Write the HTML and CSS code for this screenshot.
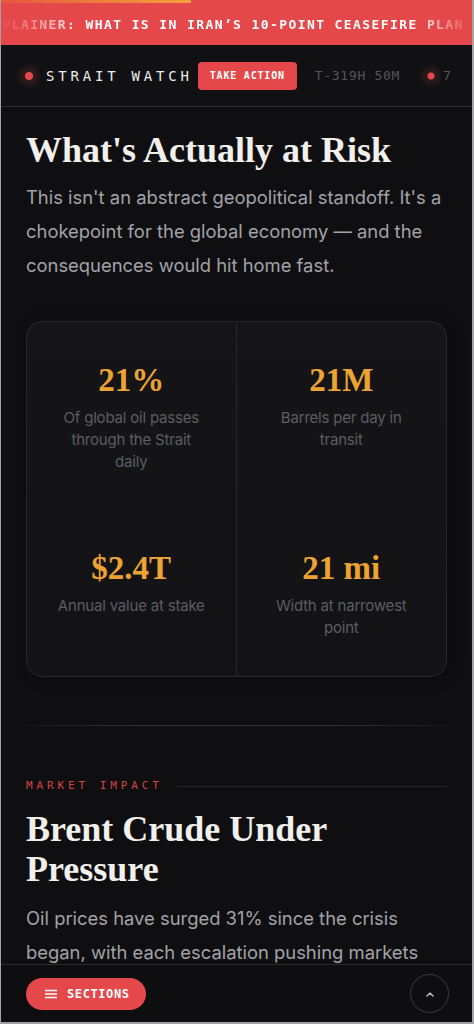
FILE: index.html
```html
<!DOCTYPE html>
<html lang="en">
<head>
    <meta charset="UTF-8">
    <meta name="viewport" content="width=device-width, initial-scale=1.0">
    <title>Strait Watch</title>
    <link rel="stylesheet" href="styles.css">
</head>
<body>
    <div class="app">
        <div class="ticker">
            <div class="progress"></div>
            <div class="ticker-row">
                <span class="ticker-text">EXPLAINER: WHAT IS IN IRAN’S 10-POINT CEASEFIRE PLAN &nbsp;/&nbsp; LIVE UPDATES</span>
            </div>
        </div>

        <header class="topbar">
            <span class="live-dot"></span>
            <span class="brand">STRAIT WATCH</span>
            <a class="action-btn" href="#">TAKE ACTION</a>
            <span class="timer">T-319H 50M</span>
            <span class="live-dot small"></span>
            <span class="count">7</span>
        </header>

        <main class="content">
            <h2 class="title">What's Actually at Risk</h2>
            <p class="lead">This isn't an abstract geopolitical standoff. It's a chokepoint for the global economy — and the consequences would hit home fast.</p>

            <div class="stats">
                <div class="stat">
                    <div class="stat-num">21%</div>
                    <div class="stat-label">Of global oil passes through the Strait daily</div>
                </div>
                <div class="stat">
                    <div class="stat-num">21M</div>
                    <div class="stat-label">Barrels per day in transit</div>
                </div>
                <div class="stat">
                    <div class="stat-num">$2.4T</div>
                    <div class="stat-label">Annual value at stake</div>
                </div>
                <div class="stat">
                    <div class="stat-num">21 mi</div>
                    <div class="stat-label">Width at narrowest point</div>
                </div>
            </div>

            <hr class="divider">

            <div class="eyebrow">
                <span>MARKET IMPACT</span>
                <span class="eyebrow-line"></span>
            </div>
            <h2 class="title">Brent Crude Under Pressure</h2>
            <p class="lead">Oil prices have surged 31% since the crisis began, with each escalation pushing markets</p>
        </main>

        <nav class="bottom-bar">
            <button class="sections-btn">
                <svg width="12" height="10" viewBox="0 0 12 10"><path d="M0 1.5h12M0 5h12M0 8.5h12" stroke="#fff" stroke-width="1.5"/></svg>
                SECTIONS
            </button>
            <button class="top-btn" aria-label="Back to top">
                <svg width="10" height="6" viewBox="0 0 10 6"><path d="M2 5l3-3 3 3" fill="none" stroke="#b5b5ba" stroke-width="1.5" stroke-linecap="round" stroke-linejoin="round"/></svg>
            </button>
        </nav>
    </div>
</body>
</html>
```

FILE: styles.css
```css
body {
    margin: 0;
    background-color: #a3a3a6; /* frame around the page */
    padding: 0 2px 2px 1px;
    font-family: Inter, "Noto Sans", sans-serif;
}

.app {
    height: calc(100vh - 2px);
    display: flex;
    flex-direction: column;
    background-color: #0f0f12;
    overflow: hidden;
}

/* ticker */
.ticker {
    background-color: #e5484a;
    flex-shrink: 0;
}

.progress {
    height: 3px;
    width: 190px;
    background: linear-gradient(90deg, #e8573f, #f2a23a);
}

.ticker-row {
    height: 42px;
    display: flex;
    align-items: center;
    overflow: hidden;
    -webkit-mask-image: linear-gradient(90deg, transparent 0, #000 85px, #000 calc(100% - 60px), transparent 100%);
    mask-image: linear-gradient(90deg, transparent 0, #000 85px, #000 calc(100% - 60px), transparent 100%);
}

.ticker-text {
    font-family: "DejaVu Sans Mono", "Liberation Mono", monospace;
    font-size: 13px;
    font-weight: bold;
    letter-spacing: 1.4px;
    color: #fff;
    white-space: nowrap;
    transform: translateX(-17px); /* marquee position */
}

/* top bar */
.topbar {
    height: 61px;
    flex-shrink: 0;
    display: flex;
    align-items: center;
    padding-left: 16px;
    background-color: #111114;
    border-bottom: 1px solid #2b2b30;
    white-space: nowrap;
    overflow: hidden;
    font-family: "DejaVu Sans Mono", "Liberation Mono", monospace;
}

.topbar > * {
    flex-shrink: 0;
}

.live-dot {
    width: 24px;
    height: 24px;
    border-radius: 50%;
    background: radial-gradient(circle, #e5484a 0 3.5px, rgba(229, 72, 74, 0.16) 4.5px, rgba(229, 72, 74, 0.05) 11px, transparent 12px);
    margin-right: 5px;
}

.live-dot.small {
    width: 22px;
    height: 22px;
    margin-left: 20px;
    margin-right: 1px;
    background: radial-gradient(circle, #e5484a 0 3px, rgba(229, 72, 74, 0.14) 4px, rgba(229, 72, 74, 0.05) 10px, transparent 11px);
}

.brand {
    font-size: 14px;
    letter-spacing: 3.8px;
    color: #ececec;
    margin-right: 5px;
}

.action-btn {
    height: 28px;
    line-height: 28px;
    padding: 0 12px;
    border-radius: 4px;
    background-color: #e5484a;
    color: #fff;
    font-size: 10px;
    font-weight: bold;
    letter-spacing: 0.8px;
    text-decoration: none;
}

.timer {
    margin-left: 18px;
    font-size: 13px;
    letter-spacing: 0.7px;
    color: #55555b;
}

.count {
    font-size: 13px;
    color: #55555b;
}

/* main content */
.content {
    flex: 1;
    overflow: hidden;
    padding: 23px 25px 0 25px;
}

.title {
    font-family: "Liberation Serif", "DejaVu Serif", serif;
    font-weight: bold;
    font-size: 36px;
    line-height: 40px;
    color: #f1f0ec;
    margin: 0;
}

.lead {
    font-size: 18.4px;
    line-height: 34px;
    color: #a2a2a7;
    margin: 10px 0 0 0;
}

.stats {
    margin-top: 39px;
    display: grid;
    grid-template-columns: 1fr 1fr;
    border: 1px solid #27272c;
    border-radius: 16px;
    background: linear-gradient(180deg, #151518, #131316);
    box-shadow: 4px 0 14px rgba(0, 0, 0, 0.35);
}

.stat {
    padding: 38px 28px 37px;
    text-align: center;
}

.stat:nth-child(odd) {
    border-right: 1px solid #27272c;
}

.stat-num {
    font-family: "Liberation Serif", "DejaVu Serif", serif;
    font-weight: bold;
    font-size: 33px;
    line-height: 41px;
    color: #eda332;
}

.stat-label {
    margin-top: 6px;
    font-size: 15px;
    line-height: 22px;
    color: #5c5c62;
    letter-spacing: -0.2px;
}

.divider {
    border: none;
    height: 1px;
    margin: 48px 0 0 0;
    background: linear-gradient(90deg, rgba(60, 60, 66, 0.2), #34343a 30%, #34343a 70%, rgba(60, 60, 66, 0.2));
}

.eyebrow {
    margin-top: 52px;
    display: flex;
    align-items: center;
    font-family: "DejaVu Sans Mono", "Liberation Mono", monospace;
    font-size: 11px;
    line-height: 16px;
    letter-spacing: 3.9px;
    color: #d4433f;
    margin-bottom: 15px;
}

.eyebrow-line {
    flex: 1;
    height: 1px;
    margin-left: 14px;
    background-color: #26262b;
}

.content .eyebrow + .title + .lead {
    margin-top: 12px;
}

/* bottom bar */
.bottom-bar {
    height: 57px;
    flex-shrink: 0;
    display: flex;
    align-items: center;
    justify-content: space-between;
    padding: 0 23px 0 25px;
    background-color: #0e0e11;
    border-top: 1px solid #2a2a2f;
}

.sections-btn {
    height: 32px;
    width: 120px;
    border: none;
    border-radius: 16px;
    background-color: #e5484a;
    color: #fff;
    display: flex;
    align-items: center;
    gap: 10px;
    padding: 0 0 0 19px;
    font-family: "DejaVu Sans Mono", "Liberation Mono", monospace;
    font-size: 12px;
    font-weight: bold;
    letter-spacing: 0.6px;
    cursor: pointer;
}

.top-btn {
    width: 39px;
    height: 39px;
    border-radius: 50%;
    border: 1px solid #3a3a40;
    background: transparent;
    display: flex;
    align-items: center;
    justify-content: center;
    padding: 0;
    cursor: pointer;
}
```
